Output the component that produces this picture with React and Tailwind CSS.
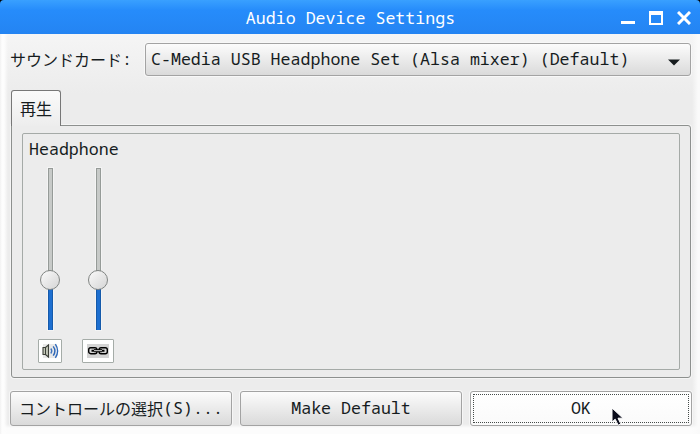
import React from 'react';

const channels = [
  { name: 'volume', icon: 'speaker', box: 'w-6' },
  { name: 'balance', icon: 'link', box: 'w-8' },
];

const latin = "font-['Noto_Sans_Mono','DejaVu_Sans_Mono',monospace] text-[16.63px]";
const japanese = "font-['Noto_Sans_CJK_JP',sans-serif] text-[16px]";
const buttonBase =
  'flex h-[35px] w-[222px] items-center justify-center rounded-[3px] border border-[#a3a3a3] whitespace-pre shadow-[0_0_0_1px_#f6f6f6]';

const SpeakerIcon = () => (
  <svg width="17" height="16" viewBox="0 0 17 16" fill="none">
    <rect x="1" y="1" width="13" height="14" fill="#e9e9e9" />
    <path d="M1 4.5h2.5l3-2.5v12l-3-2.5H1z" fill="#c3c7b8" stroke="#3c3f38" strokeWidth="1.1" />
    <path d="M3.5 4.5v7" stroke="#3c3f38" />
    <path d="M8.8 5.5q2 2.5 0 5" stroke="#3f74bd" strokeWidth="1.3" />
    <path d="M11.2 3.4q3.4 4.6 0 9.2" stroke="#2f68b8" strokeWidth="1.4" />
    <path d="M13.4 1.2q4.4 6.8 0 13.6" stroke="#2f68b8" strokeWidth="1.4" />
  </svg>
);

const LinkIcon = () => (
  <svg width="22" height="14" viewBox="0 0 22 14" fill="none">
    <path d="M0 0h22v14H0z" fill="#d4d4d4" />
    <rect x="1.7" y="3.7" width="8.2" height="6" rx="2" stroke="#000" strokeWidth="1.4" />
    <rect x="12.1" y="3.7" width="8.2" height="6" rx="2" stroke="#000" strokeWidth="1.4" />
    <path d="M4.5 6.7h4.5M13 6.7h4.5" stroke="#000" strokeWidth="2" />
    <path d="M7 6.7h8" stroke="#000" strokeWidth="3" />
    <path d="M7 6.7h8" stroke="#ddd" />
  </svg>
);

const Slider = ({ channel }) => (
  <div className={`flex flex-col items-center ${channel.icon === 'link' ? 'w-8' : 'w-6'}`}>
    <div className="relative h-[162px] w-[5px] border border-[#969b98] bg-[#c7cac8] shadow-[0_0_0_1px_#f4f4f4]">
      <div className="absolute -inset-x-px -bottom-px h-[50px] border-x border-[#155aaa] bg-[#1d6fd0]" />
      <div className="absolute top-[100.5px] -left-[8.5px] size-[20px] rounded-full border border-[#818583] bg-linear-to-br from-[#fafafa] to-[#d5d5d5]" />
    </div>
    <div className={`mt-[9px] flex h-6 items-center justify-center rounded-[1px] border border-[#a5aca8] bg-white ${channel.box}`}>
      {channel.icon === 'speaker' ? <SpeakerIcon /> : <LinkIcon />}
    </div>
  </div>
);

const TitleBar = () => (
  <header className="relative flex h-[34px] items-center justify-center rounded-t-[4px] bg-linear-to-b from-[#39a0ff] via-[#268cfb] via-30% to-[#2484f2] text-white">
    <h1 className={`${latin} leading-none whitespace-pre pt-[3px] pl-px`}>Audio Device Settings</h1>
    <div className="absolute top-[11px] right-[9px] flex gap-[14px]">
      <svg width="14" height="14" viewBox="0 0 14 14"><path d="M0 10h14v3H0z" fill="#fff" /></svg>
      <svg width="14" height="14" viewBox="0 0 14 14"><path d="M0 0h14v14H0zM2 4v8h10V4z" fill="#fff" fillRule="evenodd" /></svg>
      <svg width="14" height="14" viewBox="0 0 14 14"><path d="M1 1l12 12M13 1L1 13" stroke="#fff" strokeWidth="3" /></svg>
    </div>
  </header>
);

export default function App() {
  return (
    <div className="h-[434px] w-[700px] overflow-hidden bg-black text-[#161c1e]">
      <TitleBar />
      <main className="h-[400px] bg-[linear-gradient(to_right,#f2f2f2_0,#fdfdfd_2px,#fdfdfd_4px,transparent_8px,transparent_692px,#fafafa_698px),linear-gradient(to_bottom,#f5f5f5_0,#ececec_60px,#ececec_390px,#fcfcfc_394px)] pt-[9px] pl-[10px]">
        <div className="flex h-[33px] items-center">
          <label className="flex w-[135px] items-center whitespace-pre">
            <span className={`${japanese} pb-[2px]`}>サウンドカード</span>
            <span className={latin}>:</span>
          </label>
          <div className="flex h-[33px] w-[546px] items-center justify-between rounded-[3px] border border-[#a3a3a3] bg-linear-to-b from-[#fcfcfc] to-[#dadada] pr-[10px] pl-[5px] shadow-[0_0_0_1px_#f8f8f8]">
            <span className={`${latin} whitespace-pre`}>C-Media USB Headphone Set (Alsa mixer) (Default)</span>
            <svg className="mt-[5px]" width="12" height="7" viewBox="0 0 12 7"><path d="M0 .5h12L6 6.5z" fill="#161c1e" /></svg>
          </div>
        </div>

        <div className="mt-[14px] ml-px w-[680px]">
          <div className={`relative z-10 flex h-9 w-[50px] items-center justify-center rounded-t-[3px] border border-b-0 border-[#777] bg-linear-to-b from-[#fafafa] to-[#ededed] pb-[2px] ${japanese}`}>
            再生
          </div>
          <section className="-mt-px h-[253px] rounded-r-[3px] rounded-bl-[3px] border border-[#8d908e] bg-[#ececec] pt-[7px] pl-[10px] shadow-[0_0_0_1px_#f5f5f5]">
            <div className="h-[237px] w-[658px] rounded-[2px] border border-[#a5aaa7] pt-[3px] pl-[5px]">
              <h2 className={`${latin} pl-px leading-[24px]`}>Headphone</h2>
              <div className="mt-[7px] ml-[10px] flex gap-5">
                {channels.map((channel) => (
                  <Slider key={channel.name} channel={channel} />
                ))}
              </div>
            </div>
          </section>
        </div>

        <footer className="mt-[13px] flex gap-2">
          <button className={`${buttonBase} bg-linear-to-b from-[#fcfcfc] to-[#dadada]`}>
            <span className={`${japanese} pb-[2px]`}>コントロールの選択</span>
            <span className={latin}>(S)...</span>
          </button>
          <button className={`${buttonBase} ${latin} bg-linear-to-b from-[#fcfcfc] to-[#dadada]`}>Make Default</button>
          <button className={`${buttonBase} ${latin} relative bg-linear-to-b from-white to-[#fafafa]`}>
            <span className="absolute inset-[2px] border border-dotted border-[#444b49]" />
            OK
            <svg className="absolute top-[15px] left-[140px]" width="13" height="20" viewBox="0 0 13 20">
              <path d="M1 1v14l3.2-2.8 3 6 2.6-1.3-2.8-5.7H12z" fill="#0b0d1c" stroke="#fff" strokeWidth="1" />
            </svg>
          </button>
        </footer>
      </main>
    </div>
  );
}
